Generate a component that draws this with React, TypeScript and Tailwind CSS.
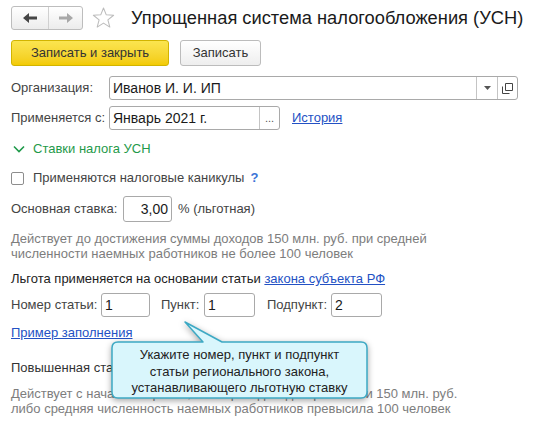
import React from "react";

const inputBox = "h-[24px] border border-[#a9a9a9] rounded-[3px] bg-white flex items-center";

function NavArrows() {
  return (
    <div className="flex h-[24px] w-[72px] rounded-[3px] border border-[#bdbdbd] bg-gradient-to-b from-white to-[#ececec]">
      <div className="flex w-[37px] items-center justify-center border-r border-[#d0d0d0]">
        <svg width="14" height="10" viewBox="0 0 14 10">
          <path d="M0 5 L6 0 L6 3.5 L14 3.5 L14 6.5 L6 6.5 L6 10 Z" fill="#454545" />
        </svg>
      </div>
      <div className="flex flex-1 items-center justify-center">
        <svg width="14" height="10" viewBox="0 0 14 10">
          <path d="M14 5 L8 0 L8 3.5 L0 3.5 L0 6.5 L8 6.5 L8 10 Z" fill="#a8a8a8" />
        </svg>
      </div>
    </div>
  );
}

function Star() {
  return (
    <svg width="23" height="22" viewBox="0 0 24 23" className="ml-[9px]">
      <path
        d="M12 1 L14.9 8.2 L22.6 8.6 L16.6 13.5 L18.6 21 L12 16.8 L5.4 21 L7.4 13.5 L1.4 8.6 L9.1 8.2 Z"
        fill="none"
        stroke="#bcbcbc"
        strokeWidth="1.1"
        strokeLinejoin="round"
      />
    </svg>
  );
}

function SmallInput({ value, width }: { value: string; width: string }) {
  return (
    <div className={`${inputBox} ${width} px-[3px] text-[14px] text-[#1a1a1a]`}>{value}</div>
  );
}

export default function App() {
  return (
    <div className="relative h-[424px] w-[550px] overflow-hidden bg-white px-[11px] pt-[6px] font-['Liberation_Sans',Arial,sans-serif] text-[13px] text-[#444]">
      {/* header */}
      <div className="flex h-[24px] items-center">
        <NavArrows />
        <Star />
        <div className="ml-[16px] text-[18.3px] leading-[24px] text-[#1a1a1a]">
          Упрощенная система налогообложения (УСН)
        </div>
      </div>

      {/* command bar */}
      <div className="mt-[10px] flex h-[26px] gap-[11px]">
        <button className="h-[26px] w-[158px] rounded-[3px] border border-[#d2b400] bg-gradient-to-b from-[#fbe54f] to-[#f3cb00] text-[13px] text-[#333]">
          Записать и закрыть
        </button>
        <button className="h-[26px] w-[81px] rounded-[3px] border border-[#bcbcbc] bg-gradient-to-b from-white to-[#eeeeee] text-[13px] text-[#333]">
          Записать
        </button>
      </div>

      {/* organization */}
      <div className="mt-[10px] flex h-[24px] items-center">
        <div className="w-[98px]">Организация:</div>
        <div className={`${inputBox} w-[409px]`}>
          <div className="flex-1 px-[3px] text-[14px] text-[#1a1a1a]">Иванов И. И. ИП</div>
          <div className="flex h-full w-[21px] items-center justify-center border-l border-[#c4c4c4]">
            <svg width="7" height="4" viewBox="0 0 7 4">
              <path d="M0 0 L7 0 L3.5 4 Z" fill="#555" />
            </svg>
          </div>
          <div className="flex h-full w-[20px] items-center justify-center border-l border-[#c4c4c4]">
            <svg width="11" height="11" viewBox="0 0 11 11">
              <path d="M3.5 0.5 H10.5 V7.5 H3.5 Z" fill="none" stroke="#444" strokeWidth="1" />
              <path d="M0.5 3.5 V10.5 H7.5" fill="none" stroke="#444" strokeWidth="1" />
            </svg>
          </div>
        </div>
      </div>

      {/* applied from */}
      <div className="mt-[6px] flex h-[24px] items-center">
        <div className="w-[98px]">Применяется с:</div>
        <div className={`${inputBox} w-[171px]`}>
          <div className="flex-1 px-[3px] text-[14px] text-[#1a1a1a]">Январь 2021 г.</div>
          <div className="flex h-full w-[20px] items-end justify-center border-l border-[#c4c4c4] pb-[5px] text-[11px] leading-none text-[#555]">
            ...
          </div>
        </div>
        <a className="ml-[12px] text-[13px] text-[#2351c4] underline">История</a>
      </div>

      {/* group header */}
      <div className="mt-[11px] flex h-[16px] items-center text-[13px] text-[#1f9a4a]">
        <svg width="12" height="8" viewBox="0 0 12 8" className="ml-[2px] mr-[8px]">
          <path d="M1 1.5 L6 6.5 L11 1.5" fill="none" stroke="#1f9a4a" strokeWidth="1.6" />
        </svg>
        Ставки налога УСН
      </div>

      {/* checkbox */}
      <div className="mt-[13px] flex h-[16px] items-center">
        <div className="h-[13px] w-[13px] rounded-[2px] border border-[#8d8d8d] bg-white" />
        <span className="ml-[9px]">Применяются налоговые каникулы</span>
        <span className="ml-[6px] font-bold text-[#3b73d6]">?</span>
      </div>

      {/* rate */}
      <div className="mt-[10px] flex h-[26px] items-center">
        <div className="w-[112px]">Основная ставка:</div>
        <div className={`${inputBox} h-[26px] w-[49px] justify-end px-[3px] text-[14px] text-[#1a1a1a]`}>3,00</div>
        <span className="ml-[6px]">% (льготная)</span>
      </div>

      <div className="mt-[9px] leading-[15px] text-[#7d7d7d]">
        Действует до достижения суммы доходов 150 млн. руб. при средней
        <br />
        численности наемных работников не более 100 человек
      </div>

      <div className="mt-[10px] h-[15px] leading-[15px] text-[#222]">
        Льгота применяется на основании статьи{" "}
        <a className="text-[#2351c4] underline">закона субъекта РФ</a>
      </div>

      {/* article inputs */}
      <div className="mt-[7px] flex h-[24px] items-center">
        <span className="w-[90px]">Номер статьи:</span>
        <SmallInput value="1" width="w-[49px]" />
        <span className="ml-[11px] w-[43px]">Пункт:</span>
        <SmallInput value="1" width="w-[51px]" />
        <span className="ml-[12px] w-[64px]">Подпункт:</span>
        <SmallInput value="2" width="w-[51px]" />
      </div>

      <div className="mt-[8px] h-[16px] leading-[16px]">
        <a className="text-[#2351c4] underline">Пример заполнения</a>
      </div>

      <div className="mt-[19px] h-[15px] leading-[15px] text-[#333]">
        Повышенная ставка: 6,00 % (при превышении лимитов)
      </div>

      <div className="mt-[11px] leading-[15px] text-[#7d7d7d]">
        Действует с начала квартала, в котором доходы превысили 150 млн. руб.
        <br />
        либо средняя численность наемных работников превысила 100 человек
      </div>

      {/* tooltip balloon */}
      <svg
        width="275"
        height="95"
        viewBox="0 0 275 95"
        className="absolute left-[100px] top-[315px] drop-shadow-[0_2px_3px_rgba(0,0,0,0.35)]"
      >
        <path
          d="M18 27 L103 27 L85 7 L122 27 L261 27 Q267 27 267 33 L267 77 Q267 83 261 83 L18 83 Q12 83 12 77 L12 33 Q12 27 18 27 Z"
          fill="#d9f6fc"
          stroke="#3da9c4"
          strokeWidth="1.5"
          strokeLinejoin="round"
        />
      </svg>
      <div className="absolute left-[112px] top-[347px] w-[255px] text-center text-[13px] leading-[16.5px] text-[#222]">
        Укажите номер, пункт и подпункт
        <br />
        статьи регионального закона,
        <br />
        устанавливающего льготную ставку
      </div>
    </div>
  );
}
